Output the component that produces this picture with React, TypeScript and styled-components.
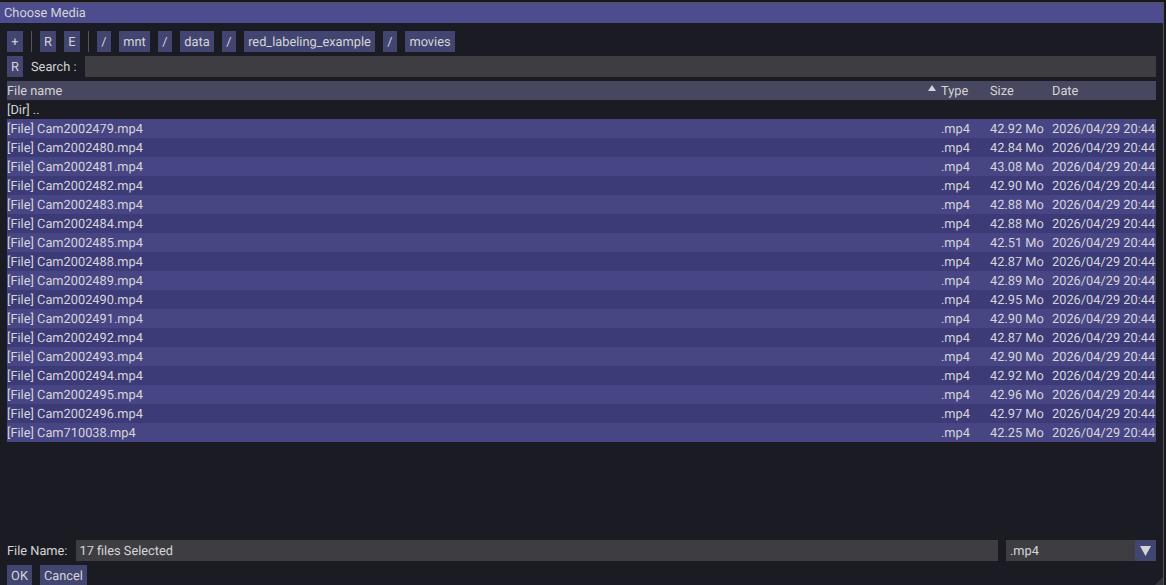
import React from 'react'
import styled, { createGlobalStyle } from 'styled-components'

const GlobalStyle = createGlobalStyle`
  html, body {
    margin: 0;
    padding: 0;
    background: #1b1c23;
  }
`

const Window = styled.div`
  position: relative;
  box-sizing: border-box;
  width: 1166px;
  height: 585px;
  overflow: hidden;
  display: flex;
  flex-direction: column;
  padding: 3px 3px 0 0;
  background: #1b1c23;
  color: #d4d4d8;
  font-family: Roboto, "Liberation Sans", sans-serif;
  font-size: 12.8px;
  line-height: 15px;
  white-space: nowrap;
  text-rendering: geometricPrecision;
  box-shadow:
    inset 0 2px 0 #18181b,
    inset -2px 0 0 #18181b,
    inset 0 3px 0 #505056,
    inset -3px 0 0 #505056;
`

const TitleBar = styled.div`
  height: 20px;
  line-height: 22px;
  padding-left: 4px;
  background: #4c4c8e;
  flex: none;
`

const Body = styled.div`
  flex: 1;
  min-height: 0;
  display: flex;
  flex-direction: column;
  padding: 8px 7px 0 7px;
  margin-bottom: -1px;
`

const Toolbar = styled.div`
  display: flex;
  align-items: center;
  gap: 8px;
  height: 21px;
  flex: none;
`

const SearchRow = styled(Toolbar)`
  margin-top: 4px;
`

const Button = styled.div<{ $width: number }>`
  width: ${(p) => p.$width}px;
  height: 21px;
  line-height: 23px;
  background: #41456f;
  text-align: center;
  flex: none;
`

const Separator = styled.div`
  width: 1px;
  height: 21px;
  background: #55555b;
  flex: none;
`

const Field = styled.div`
  height: 21px;
  line-height: 23px;
  padding: 0 4px 0 3px;
  box-sizing: border-box;
  background: #3e3e42;
  flex: 1;
  min-width: 0;
`

const FileTable = styled.div`
  flex: 1;
  min-height: 0;
  margin-top: 4px;
  display: flex;
  flex-direction: column;
`

const Row = styled.div<{ $kind?: 'head' | 'dir' | 'odd' | 'even' }>`
  display: grid;
  grid-template-columns: 934px 49px 62px 104px;
  height: 19px;
  line-height: 21px;
  flex: none;
  background: ${(p) =>
    p.$kind === 'head'
      ? '#47475f'
      : p.$kind === 'odd'
        ? '#484585'
        : p.$kind === 'even'
          ? '#3d3a78'
          : 'transparent'};
`

const Cell = styled.div`
  height: 19px;
`

const SortCell = styled(Cell)`
  position: relative;
`

const SortArrow = styled.svg`
  position: absolute;
  right: 5px;
  top: 4px;
  width: 8px;
  height: 6px;
  fill: #d4d4d8;
`

const Footer = styled.div`
  display: flex;
  align-items: center;
  gap: 9px;
  height: 21px;
  flex: none;
`

const Label = styled.div`
  flex: none;
  height: 21px;
  line-height: 23px;
`

const FilterBox = styled.div`
  display: flex;
  width: 150px;
  height: 21px;
  flex: none;
  margin-left: -1px;
  background: #3e3e42;
`

const FilterValue = styled.div`
  flex: 1;
  line-height: 23px;
  padding-left: 4px;
`

const ArrowButton = styled.div`
  width: 21px;
  height: 21px;
  background: #41456f;
  display: flex;
  align-items: center;
  justify-content: center;
`

const ArrowIcon = styled.svg`
  width: 11px;
  height: 10px;
  fill: #d4d4d8;
`

const Actions = styled(Toolbar)`
  margin-top: 4px;
`

const ResizeGrip = styled.svg`
  position: absolute;
  right: 3px;
  bottom: 0;
  width: 8px;
  height: 8px;
  fill: #34343c;
`

const crumbs: [string, number][] = [
  ['/', 14],
  ['mnt', 31],
  ['/', 14],
  ['data', 34],
  ['/', 14],
  ['red_labeling_example', 131],
  ['/', 14],
  ['movies', 50],
]

const files = [
  ['Cam2002479', '42.92'],
  ['Cam2002480', '42.84'],
  ['Cam2002481', '43.08'],
  ['Cam2002482', '42.90'],
  ['Cam2002483', '42.88'],
  ['Cam2002484', '42.88'],
  ['Cam2002485', '42.51'],
  ['Cam2002488', '42.87'],
  ['Cam2002489', '42.89'],
  ['Cam2002490', '42.95'],
  ['Cam2002491', '42.90'],
  ['Cam2002492', '42.87'],
  ['Cam2002493', '42.90'],
  ['Cam2002494', '42.92'],
  ['Cam2002495', '42.96'],
  ['Cam2002496', '42.97'],
  ['Cam710038', '42.25'],
]

const App: React.FC = () => {
  return (
    <Window>
      <GlobalStyle />
      <TitleBar>Choose Media</TitleBar>
      <Body>
        <Toolbar>
          <Button $width={16}>+</Button>
          <Separator />
          <Button $width={16}>R</Button>
          <Button $width={16}>E</Button>
          <Separator />
          {crumbs.map(([c, w], i) => (
            <Button key={i} $width={w}>
              {c}
            </Button>
          ))}
        </Toolbar>
        <SearchRow>
          <Button $width={16}>R</Button>
          <Label>Search :</Label>
          <Field />
        </SearchRow>
        <FileTable>
          <Row $kind="head">
            <SortCell>
              File name
              <SortArrow viewBox="0 0 8 6">
                <path d="M4 0 L8 6 L0 6 Z" />
              </SortArrow>
            </SortCell>
            <Cell>Type</Cell>
            <Cell>Size</Cell>
            <Cell>Date</Cell>
          </Row>
          <Row $kind="dir">
            <Cell>[Dir] ..</Cell>
          </Row>
          {files.map(([name, size], i) => (
            <Row key={name} $kind={i % 2 === 0 ? 'odd' : 'even'}>
              <Cell>[File] {name}.mp4</Cell>
              <Cell>.mp4</Cell>
              <Cell>{size} Mo</Cell>
              <Cell>2026/04/29 20:44</Cell>
            </Row>
          ))}
        </FileTable>
        <Footer>
          <Label>File Name:</Label>
          <Field>17 files Selected</Field>
          <FilterBox>
            <FilterValue>.mp4</FilterValue>
            <ArrowButton>
              <ArrowIcon viewBox="0 0 11 10">
                <path d="M0 0 L11 0 L5.5 10 Z" />
              </ArrowIcon>
            </ArrowButton>
          </FilterBox>
        </Footer>
        <Actions>
          <Button $width={25}>OK</Button>
          <Button $width={47}>Cancel</Button>
        </Actions>
      </Body>
      <ResizeGrip viewBox="0 0 8 8">
        <path d="M8 0 L8 8 L0 8 Z" />
      </ResizeGrip>
    </Window>
  )
}

export default App
